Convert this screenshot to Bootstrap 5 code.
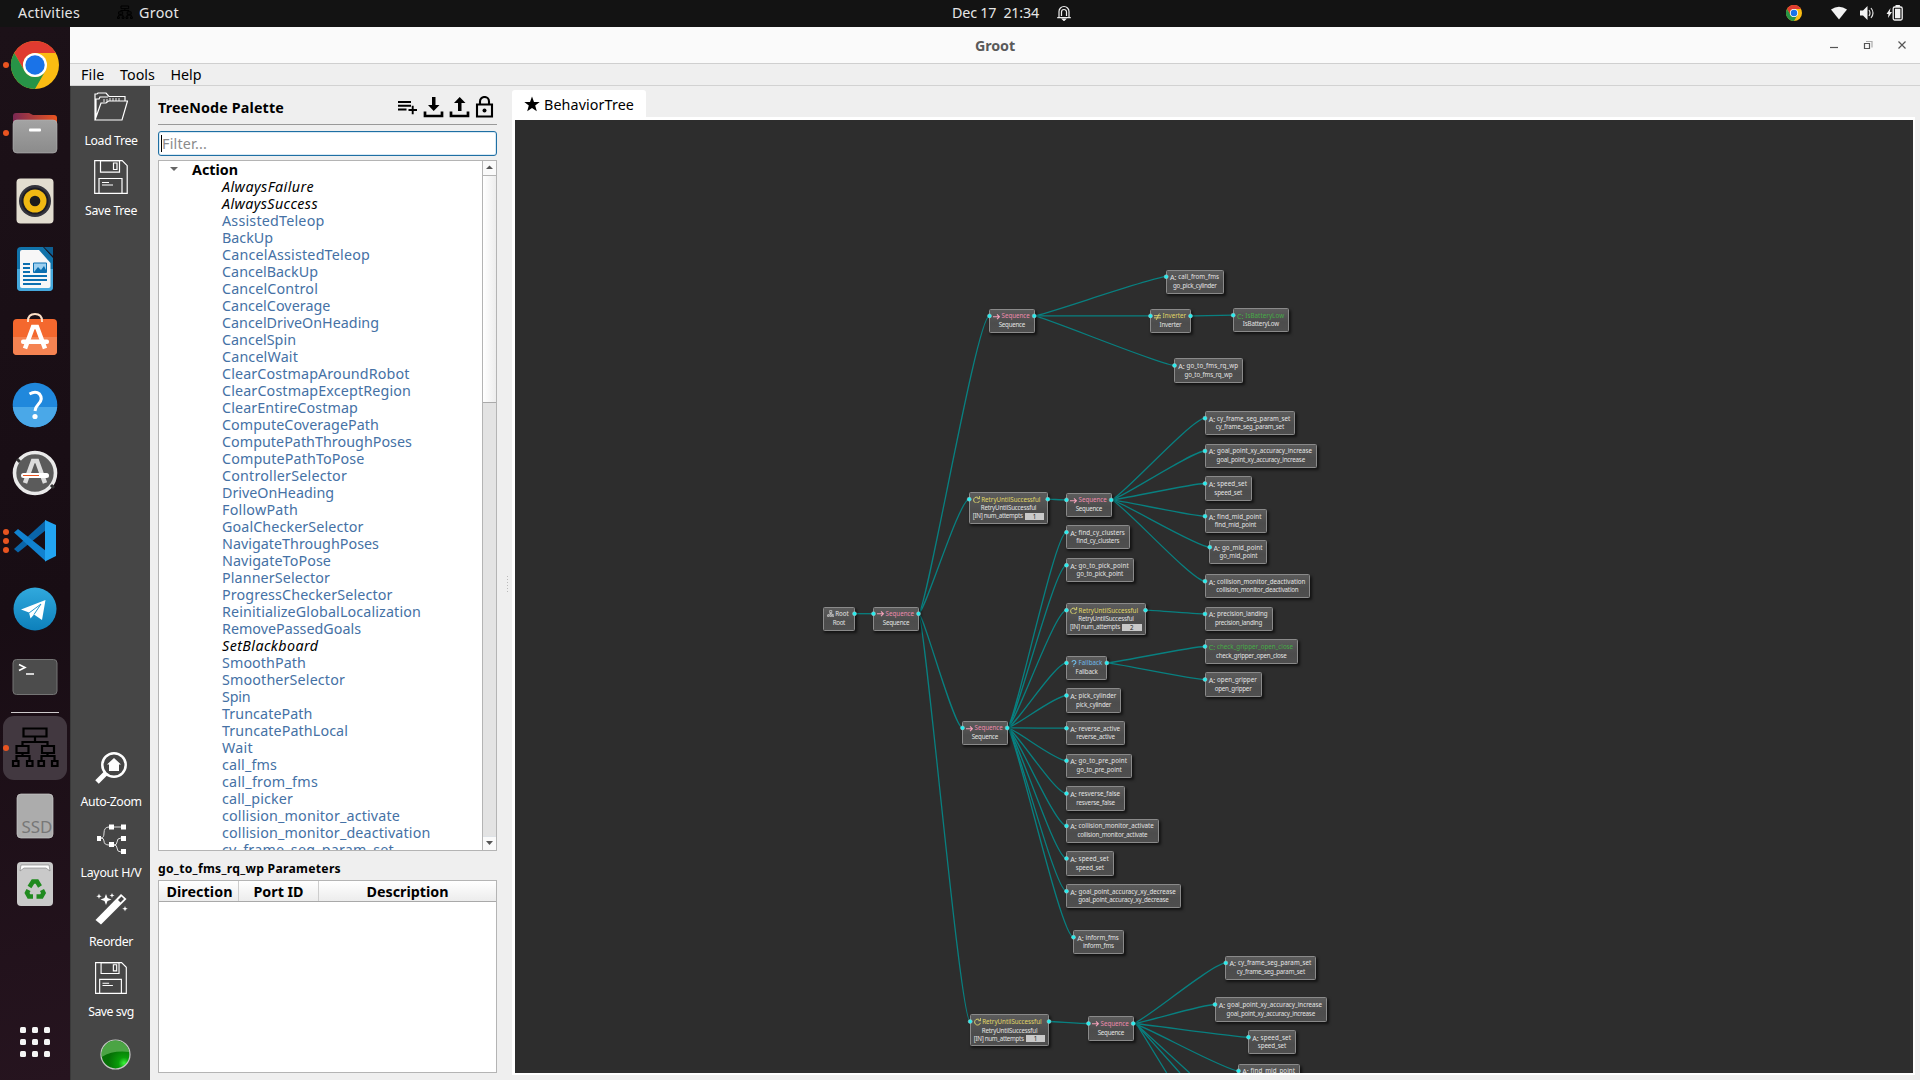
<!DOCTYPE html>
<html lang="en">
<head>
<meta charset="utf-8">
<title>Groot</title>
<link href="https://cdn.jsdelivr.net/npm/bootstrap@5.3.0/dist/css/bootstrap.min.css" rel="stylesheet">
<script src="https://cdn.jsdelivr.net/npm/bootstrap@5.3.0/dist/js/bootstrap.bundle.min.js"></script>
<style>
body{font-family:"Noto Sans","Open Sans",sans-serif;font-size:14.3px;line-height:17px;color:#000;background:#efefef;width:1920px;height:1080px;overflow:hidden}
svg{display:block;flex:none}
[data-w]{white-space:pre;display:inline-block}
.topbar{height:27px;background:#131313;color:#e6e6e6;flex:none;padding-bottom:2px}
.topbar-left{width:952px;padding-left:18px}
.app-icon{margin-left:37px;margin-right:6px}
.bell{margin-left:17px}
.dock{width:70px;padding-top:4px;background:linear-gradient(165deg,#1c1118 0,#180d14 55%,#26141f 100%);flex:none}
.dock-slot{height:68px}
.dock-sep{height:3px;padding:1px 11px}
.dock-sep div{height:1px;background:#cfcbcd}
.titlebar{height:37px;background:#fafafa;border-bottom:1px solid #cfcfcf;flex:none}
.title-side{width:135px}
.menubar{height:22px;border-bottom:1px solid #d2d2d2;padding-left:11px;gap:15.5px;flex:none}
.toolstrip{width:80px;background:#464646;border-left:1px solid #3a3a3a;color:#fff;font-size:12.3px;padding-top:4px;padding-bottom:9px;padding-left:1px;flex:none}
.tool-item{height:70px;gap:8px}
.tool-item svg{width:34px;height:34px}
.side{width:362px;padding:1px 15px 7px 8px;flex:none}
.side-title{height:38px;padding-top:3px;border-bottom:1px solid #999}
.filter-box{height:25px;border:1px solid #1f6fa3;border-radius:3px;background:#fff;color:#8b8b8b;margin-top:6px;padding-left:2px;box-shadow:inset 0 0 0 1px #d8e9f4;flex:none}
.caret-line{width:1px;height:17px;background:#000}
.tree-box{height:691px;margin-top:4px;border:1px solid #b4b4b4;background:#fff;flex:none}
.tree-items{color:#4571a5;padding-left:63px}
.tree-items>div{height:17px}
.builtin{color:#000;font-style:italic}
.sbar{width:14px;background:#e3e3e3;border-left:1px solid #b4b4b4;flex:none}
.sbar-btn{height:14px;background:#fafafa}
.sbar-thumb{height:228px;background:linear-gradient(90deg,#fff,#ededed);border-top:1px solid #b4b4b4;border-bottom:1px solid #aaa}
.param-title{font-size:12.2px;height:29px;padding-top:5px;flex:none}
.param-box{border:1px solid #b4b4b4;background:#fff}
.param-head{height:21px;background:linear-gradient(#fff,#ececec);border-bottom:1px solid #a9a9a9;text-align:center}
.param-head>div+div{border-left:1px solid #cdcdcd}
.splitter-dots{left:437px;top:549px;width:1px;height:17px;background:repeating-linear-gradient(#bbb 0 1px,transparent 1px 3px)}
.tabhead{height:27px;width:134px;margin-top:4px;background:#fff;border-radius:3px 3px 0 0;padding-left:12px;padding-top:1px;gap:4px}
.canvas-frame{height:958px;width:1403px;background:#fff;padding:3px 2px 2px 3px}
.canvas{position:relative;overflow:hidden;width:1398px;height:953px;background:#2d2d2d}
.canvas>svg{position:absolute;left:0;top:0}
.bt-node{position:absolute;background:linear-gradient(#5b5b5b,#4c4c4c 60%,#4f4f4f);border:1px solid #8a8a8a;border-radius:1.5px;box-shadow:1.5px 2px 3px rgba(0,0,0,.6);color:#e2e2e2;font-size:6.2px;line-height:8px}
.bt-node .t1{padding-left:3.2px;height:8px;margin-top:2.6px}
.bt-node .sym{width:8.4px;flex:none;height:8px}
.bt-node .sym svg{width:7.5px;height:7.5px;margin-top:.3px}
.bt-node .sym span{font-size:7.2px}
.bt-node .t2{text-align:center;height:8px;margin-top:.8px}
.bt-node .t3{height:8px;padding-left:3px;gap:2px}
.bt-val{width:19.5px;height:7px;background:#c9c9c9;color:#222;text-align:center;line-height:7px}
</style>
</head>
<body class="d-flex flex-column">
<header class="topbar d-flex align-items-center">
  <div class="topbar-left d-flex align-items-center flex-shrink-0">
    <span data-w="62">Activities</span>
    <svg class="app-icon" width="16" height="15" viewBox="0 0 48 42" fill="none" stroke="#000" stroke-width="3"><use href="#groot"/></svg>
    <span data-w="40">Groot</span>
  </div>
  <span data-w="87">Dec 17  21:34</span>
  <svg class="bell" width="16" height="17" viewBox="0 0 16 17" fill="none" stroke="#eee" stroke-width="1.2"><path d="M3 13.5V7.5a5 5 0 0 1 10 0v6M1.2 13.6h13.6M5.5 12V8a2.5 2.500 0 0 1 5 0v4"/><path d="M6.500 15h3L8 16.500z" fill="#eee"/></svg>
  <div class="ms-auto d-flex align-items-center" style="padding-right:17px">
    <svg width="16" height="16" viewBox="11 10 48 48"><use href="#chrome"/></svg>
    <svg style="margin-left:29px" width="16" height="14" viewBox="0 0 16 14"><path d="M0 3.500Q8-2 16 3.500L8 13.500z" fill="#f2f2f2"/></svg>
    <svg style="margin-left:12px" width="16" height="14" viewBox="0 0 16 14"><path d="M1 4.500h3L8.500 0v14L4 9.500H1z" fill="#f2f2f2"/><path d="M10 4q2 3 0 6M12 2q4 5 0 10" fill="none" stroke="#e0e0e0" stroke-width="1.2"/></svg>
    <svg style="margin-left:11px" width="17" height="16" viewBox="0 0 17 16"><path d="M4.500 3L.5 9h2l-.5 4 4-6H3.800z" fill="#f2f2f2"/><rect x="7.200" y="2" width="9" height="13" rx="1.500" fill="none" stroke="#f2f2f2" stroke-width="1.300"/><path d="M9 3.700h5.400v9.600H9zM9.500 0h4.400v2H9.500z" fill="#f2f2f2"/></svg>
  </div>
</header>

<div class="d-flex flex-grow-1" style="min-height:0">
<nav class="dock d-flex flex-column">
  <svg class="dock-slot" width="70" height="68"><defs>
    <g id="chrome"><circle cx="35" cy="34" r="24" fill="#fbbc12"/><path d="M14.200 22A24 24 0 0 1 55.800 22H35a12 12 0 0 0-10.400 18z" fill="#e03b30"/><path d="M14.200 22A24 24 0 0 0 35 58L45.400 40A12 12 0 0 1 24.600 40z" fill="#279447"/><circle cx="35" cy="34" r="12" fill="#fff"/><circle cx="35" cy="34" r="9.700" fill="#1a73e8"/></g>
    <g id="groot"><path d="M12 1.500h23v8H12zM23.500 9.500v6M11 18v-3h25v3M5 19h12v7H5zM30.500 19h12v7h-12zM11 26v3M5 33v-4h13v4M36 26v3M30 33v-4h13v4M1.500 34h5.500v5H1.500zM15.500 34h5.500v5h-5.500zM27 34h5.500v5H27zM40.500 34H46v5h-5.500z"/></g>
    <g id="floppy" fill="none" stroke="#fff" stroke-width="1.200"><path d="M.7.7h27.500l5 5v27.600H.7z"/><path d="M6.500.7h19v11.500h-19zM19.500 3h3.500v6.500h-3.500zM5 33V18.500h23V33M8 22.500h7M8 25h11"/></g>
    </defs><use href="#chrome"/><circle cx="6" cy="34" r="3" fill="#e95420"/></svg>
  <svg class="dock-slot" width="70" height="68"><defs><linearGradient id="gf" x2="1"><stop stop-color="#7a2853"/><stop offset="1" stop-color="#e95420"/></linearGradient><linearGradient id="gg" x2="0" y2="1"><stop stop-color="#a3a3a3"/><stop offset="1" stop-color="#8b8b8b"/></linearGradient></defs><path d="M13 30V17q0-3 3-3h13l4 2h21q3 0 3 3v10z" fill="url(#gf)"/><rect x="13" y="21" width="44" height="33" rx="4" fill="url(#gg)" stroke="#b5b5b5" stroke-width=".6"/><rect x="29" y="29.500" width="12" height="3" rx="1" fill="#fff"/><circle cx="6" cy="34" r="3" fill="#e95420"/></svg>
  <svg class="dock-slot" width="70" height="68"><rect x="16.500" y="11.500" width="37" height="45" rx="4" fill="#e2ddd0"/><circle cx="35" cy="34" r="16" fill="#34343c"/><circle cx="35" cy="34" r="13.500" fill="#1d1d25"/><circle cx="35" cy="34" r="11.500" fill="#f0b913"/><circle cx="35" cy="34" r="5.300" fill="#1c1c1c"/></svg>
  <svg class="dock-slot" width="70" height="68"><path d="M21 12h22l10 11v29q0 4-4 4H21q-4 0-4-4V16q0-4 4-4z" fill="#1173aa"/><path d="M17 34h36v18q0 4-4 4H21q-4 0-4-4z" fill="#45a8dc"/><path d="M22 15h17l11.500 13v23q0 2-2 2H22q-2 0-2-2V17q0-2 2-2z" fill="#f7f7f7"/><path d="M44 12h9v9z" fill="#0e5f92"/><path d="M23 29h7M23 33h7M23 37h7M23 41h24M23 45h24M23 49h18" stroke="#0b6fb0" stroke-width="2"/><path d="M33.500 28h13v9.500h-13z" fill="#9dd0f0" stroke="#0b6fb0"/><path d="M34 37l4-5 3 3 3-4 3 6z" fill="#0b6fb0"/></svg>
  <svg class="dock-slot" width="70" height="68"><rect x="13" y="16" width="44" height="36" rx="4" fill="#f4682e"/><path d="M13 34h44v14q0 4-4 4H17q-4 0-4-4z" fill="#f58352"/><path d="M28 19v-1q0-7 7-7t7 7v1" fill="none" stroke="#fde0c8" stroke-width="2"/><path d="M25 45.500L33 24h4l8 21.500" fill="none" stroke="#fff" stroke-width="4.500"/><rect x="21" y="36.500" width="28" height="4.500" rx="2" fill="#fff"/></svg>
  <svg class="dock-slot" width="70" height="68"><circle cx="35" cy="34" r="22.300" fill="#2088dc"/><path d="M12.800 36h44.400a22.300 22.300 0 0 1-44.400 0z" fill="#4aa8e8"/><path d="M29.500 23q6-3.500 10 0 4 5-1 10-3 3-3.500 7" fill="none" stroke="#fff" stroke-width="3"/><circle cx="35" cy="45.500" r="2.600" fill="#fff"/></svg>
  <svg class="dock-slot" width="70" height="68"><circle cx="35" cy="34" r="20.500" fill="#5b5b5b" stroke="#eaeaea" stroke-width="3.600"/><path d="M17 20l3 3M51 46l3 3" stroke="#333" stroke-width="3"/><path d="M25 44L33 22h4l8 22" fill="none" stroke="#ddd" stroke-width="4.500"/><rect x="21" y="34" width="28" height="5" rx="2.500" fill="#fff"/><path d="M23 36.500h16" stroke="#e95420"/></svg>
  <svg class="dock-slot" width="70" height="68"><path d="M14 42l4 3.500L46 23V13z" fill="#0a65a9"/><path d="M14 25.500l4-3.500L46 44v10.500z" fill="#1182d0"/><path d="M45 13l11 5v31l-11 5.500z" fill="#22a4f1"/><g fill="#e95420"><circle cx="6" cy="25" r="3"/><circle cx="6" cy="34" r="3"/><circle cx="6" cy="43" r="3"/></g></svg>
  <svg class="dock-slot" width="70" height="68"><defs><linearGradient id="gt" x2="0" y2="1"><stop stop-color="#31a9dd"/><stop offset="1" stop-color="#0d80bb"/></linearGradient></defs><circle cx="35" cy="34" r="21.500" fill="url(#gt)"/><path d="M21 34.500L45.500 25 42 45l-8-5.500-3.500 4-1.500-6z" fill="#fff"/><path d="M29 38l12-9-7 10.500" stroke="#2499cf" fill="none"/></svg>
  <svg class="dock-slot" width="70" height="68"><rect x="13" y="16.500" width="44" height="35" rx="3.500" fill="#4c4c4c" stroke="#747474"/><path d="M19 21.500l6 3-6 3M26 31h8" stroke="#fff" stroke-width="1.600" fill="none"/></svg>
  <div class="dock-sep"><div></div></div>
  <svg class="dock-slot" width="70" height="68"><rect x="3" y="2" width="64" height="64" rx="11" fill="#423840"/><g transform="translate(11.500 13)" fill="none" stroke="#000" stroke-width="2.200"><use href="#groot"/></g><circle cx="6" cy="34" r="3" fill="#e95420"/></svg>
  <svg class="dock-slot" width="70" height="68"><rect x="17" y="12" width="36" height="44" rx="4" fill="#acacac" stroke="#c8c8c8" stroke-width=".7"/><text x="21.500" y="51" font-size="16" textLength="31" lengthAdjust="spacingAndGlyphs" fill="#777">SSD</text></svg>
  <svg class="dock-slot" width="70" height="68"><rect x="17" y="12" width="36" height="44" rx="4" fill="#c9c9c9"/><path d="M20 21l1-6h28l1 6-4-3H24z" fill="#fff" stroke="#777" stroke-width=".6"/><g fill="none" stroke="#208a1f" stroke-width="4.500"><path d="M29.500 37l3.500-5.500h4l3 5"/><path d="M42 40l1.500 3-2 3.500h-5"/><path d="M33 46.500h-4l-2-3.500 1.500-3"/></g></svg>
  <svg class="mt-auto" width="70" height="76" fill="#f5f5f5"><g id="dots"><rect x="20" y="23" width="6" height="6" rx="1.500"/><rect x="32" y="23" width="6" height="6" rx="1.500"/><rect x="44" y="23" width="6" height="6" rx="1.500"/></g><use href="#dots" y="12"/><use href="#dots" y="24"/></svg>
</nav>

<main class="d-flex flex-column flex-grow-1 position-relative">
  <div class="titlebar d-flex align-items-center">
    <div class="title-side"></div>
    <div class="flex-grow-1 text-center fw-bold" style="color:#5a5a5a"><span data-w="40">Groot</span></div>
    <div class="title-side"><svg width="135" height="36" fill="none" stroke="#555" stroke-width="1.200"><path d="M45 20.500h8"/><path d="M79.500 16.500h5v5h-5z"/><path d="M81 14.500h6v6" stroke="#aaa"/><path d="M113.500 14.500l7 7M120.500 14.500l-7 7"/></svg></div>
  </div>
  <div class="menubar d-flex align-items-center"><span data-w="23.500">File</span><span data-w="35">Tools</span><span data-w="31">Help</span></div>
  <div class="d-flex flex-grow-1">
    <div class="toolstrip d-flex flex-column">
      <div class="tool-item d-flex flex-column align-items-center"><svg viewBox="0 0 34 34" fill="none" stroke="#fff" stroke-width="1.200"><path d="M1 30V4h2l1-1h8l3 3.500h16v5M1 30L7 13h5l2.500-2H33.500L28 30zM2 27V9h3l1-2h8"/><path d="M10 9v3M13 9v3M16 8v3M19 8v3M22 8v3M25 8v3" stroke-width=".9"/></svg><span data-w="53">Load Tree</span></div>
      <div class="tool-item d-flex flex-column align-items-center"><svg viewBox="0 0 34 34"><use href="#floppy"/></svg><span data-w="52">Save Tree</span></div>
      <div class="tool-item d-flex flex-column align-items-center mt-auto"><svg viewBox="0 0 34 34"><circle cx="20" cy="14" r="11.700" fill="none" stroke="#fff" stroke-width="2.500"/><path d="M3 31l9-9" stroke="#fff" stroke-width="5"/><path d="M20 7l7 6.500h-2V20H15v-6.500h-2z" fill="#fff"/></svg><span data-w="61">Auto-Zoom</span></div>
      <div class="tool-item d-flex flex-column align-items-center"><svg viewBox="0 0 34 34"><path d="M3 15h4v5H3zM15 3.500h5v5h-5zM27 3.500h5v5h-5zM15 21h5v5h-5zM27 15h5v5h-5zM27 28h5v5h-5z" fill="#fff"/><path d="M7 17q3 0 3-5 0-6 5-6M7 17q3 0 3 3 0 4 5 4M20 6h7M20 24q3 0 3-3 0-4 4-4M20 24q3 0 3 3 0 4 4 4" fill="none" stroke="#ddd"/></svg><span data-w="61" class="pt-1" style="margin-top:-3px">Layout H/V</span></div>
      <div class="tool-item d-flex flex-column align-items-center"><svg viewBox="0 0 34 34"><path d="M1.500 29L27 3l5.500 5L7 33.500z" fill="#fff"/><path d="M24 9l3.500-3.500 2.500 2.500-3.500 3.500z" fill="#464646"/><path d="M12 3l1.500 4 4 1.500-4 1.500L12 14l-1.500-4-4-1.500 4-1.500zM5 2.500l.7 2 2 .7-2 .7-.7 2-.7-2-2-.7 2-.7zM18 2l.7 1.700 1.800.7-1.800.7L18 7l-.7-1.900-1.800-.7 1.800-.7zM31 15l.7 2 2 .7-2 .7-.7 2-.7-2-2-.7 2-.7z" fill="#fff"/></svg><span data-w="44">Reorder</span></div>
      <div class="tool-item d-flex flex-column align-items-center"><svg viewBox="-1 -1 36 36"><use href="#floppy"/></svg><span data-w="45.500">Save svg</span></div>
      <svg width="78" height="40"><defs><radialGradient id="led" cx=".8" cy=".8" r=".8"><stop stop-color="#3df53d"/><stop offset=".25" stop-color="#0a9d0a"/><stop offset=".7" stop-color="#067006"/></radialGradient></defs><circle cx="43.500" cy="23.500" r="14.500" fill="url(#led)" stroke="#c8c8c8" stroke-width="1.200"/><path d="M29.700 26A14 14 0 1 1 57.300 21Q41 19 29.700 26z" fill="#58ad50" opacity=".85"/></svg>
    </div>

    <section class="side d-flex flex-column">
      <div class="side-title d-flex align-items-center"><b data-w="126">TreeNode Palette</b>
        <div class="ms-auto d-flex" style="margin-right:3.5px;gap:5px">
          <svg width="21" height="22" viewBox="0 0 21 22" stroke="#000" stroke-width="1.900"><path d="M1 6h13M1 9.700h13M1 13.500h8.500M11.500 14H20M15.700 9.800v8.500"/></svg>
          <svg width="21" height="22" viewBox="0 0 21 22"><path d="M2 15.500v4.500h17v-4.500" fill="none" stroke="#000" stroke-width="2.700"/><path d="M9 1h3.500v8h4L10.700 15 5 9h4z"/></svg>
          <svg width="21" height="22" viewBox="0 0 21 22"><path d="M2 15.500v4.500h17v-4.500" fill="none" stroke="#000" stroke-width="2.700"/><path d="M9 15h3.500V7h4L10.700 1 5 7h4z"/></svg>
          <svg width="19" height="22" viewBox="0 0 19 22"><path d="M2 8.500h15v12H2zM5 8.500V5.500a4.500 4.500 0 0 1 9 0v3" fill="none" stroke="#000" stroke-width="2.100"/><circle cx="9.500" cy="14.500" r="2"/></svg>
        </div></div>
      <div class="filter-box d-flex align-items-center"><div class="caret-line"></div><span data-w="45">Filter...</span></div>
      <div class="tree-box d-flex">
        <div class="flex-grow-1 overflow-hidden">
          <div class="d-flex align-items-center fw-bold" style="height:17px"><svg width="33" height="17"><path d="M11 6h8l-4 4z" fill="#666"/></svg><span data-w="46">Action</span></div>
          <div class="tree-items" id="treeItems"></div>
        </div>
        <div class="sbar d-flex flex-column">
          <svg class="sbar-btn" width="13" height="13"><path d="M3 8h7L6.500 4.500z" fill="#555"/></svg>
          <div class="sbar-thumb"></div>
          <svg class="sbar-btn mt-auto border-top" width="13" height="14"><path d="M3 4h7L6.500 8z" fill="#555"/></svg>
        </div>
      </div>
      <div class="param-title d-flex align-items-center fw-bold"><span data-w="183">go_to_fms_rq_wp Parameters</span></div>
      <div class="param-box flex-grow-1"><div class="param-head d-flex fw-bold">
        <div style="width:79px;padding:2px 0 0 2px"><span data-w="66">Direction</span></div><div style="width:80px;padding-top:2px"><span data-w="50">Port ID</span></div><div class="flex-grow-1" style="padding-top:2px"><span data-w="82">Description</span></div>
      </div></div>
    </section>

    <section>
      <div class="tabhead d-flex align-items-center"><svg width="16" height="16" viewBox="0 0 16 16"><path d="M8 .5l2 5.400 5.700.2-4.500 3.500 1.600 5.600L8 12l-4.800 3.200 1.600-5.600L.3 6.100 6 5.900z"/></svg><span data-w="90">BehaviorTree</span></div>
      <div class="canvas-frame"><div class="canvas" id="canvas"></div></div>
    </section>
  </div>
  <div class="splitter-dots position-absolute"></div>
</main>
</div>

<script>
// Palette entries: label and rendered width in pixels
const items = [["AlwaysFailure",92],["AlwaysSuccess",96],["AssistedTeleop",102.5],["BackUp",51],["CancelAssistedTeleop",148],["CancelBackUp",96],["CancelControl",96],["CancelCoverage",108.5],["CancelDriveOnHeading",157],["CancelSpin",74],["CancelWait",76],["ClearCostmapAroundRobot",187.5],["ClearCostmapExceptRegion",189],["ClearEntireCostmap",136],["ComputeCoveragePath",157],["ComputePathThroughPoses",190],["ComputePathToPose",142.5],["ControllerSelector",125],["DriveOnHeading",112],["FollowPath",76],["GoalCheckerSelector",141.5],["NavigateThroughPoses",157],["NavigateToPose",109],["PlannerSelector",108],["ProgressCheckerSelector",170.5],["ReinitializeGlobalLocalization",199],["RemovePassedGoals",139],["SetBlackboard",96.5],["SmoothPath",84],["SmootherSelector",123],["Spin",28.5],["TruncatePath",90.5],["TruncatePathLocal",126],["Wait",31],["call_fms",55],["call_from_fms",96],["call_picker",71],["collision_monitor_activate",178],["collision_monitor_deactivation",208.5],["cy_frame_seg_param_set",172]];
const builtins = ["AlwaysFailure","AlwaysSuccess","SetBlackboard"];
document.getElementById("treeItems").innerHTML = items.map(([t,w]) =>
  `<div${builtins.includes(t) ? ' class="builtin"' : ''}><span data-w="${w}">${t}</span></div>`).join("");

// Tree nodes: key, kind, title, subtitle, left, top, right, attempts
const nodes = [
["root","R","Root","Root",822.7,606.5,855],["s0","S","Sequence","Sequence",873,606.5,919],
["s1","S","Sequence","Sequence",989,308.7,1034.700],["a1","A","call_from_fms","go_pick_cylinder",1165.700,269.5,1224],
["inv","I","Inverter","Inverter",1150,308.7,1191],["bat","C","IsBatteryLow","IsBatteryLow",1232.700,308,1289],
["a2","A","go_to_fms_rq_wp","go_to_fms_rq_wp",1174,358.3,1243],
["r1","L","RetryUntilSuccessful","RetryUntilSuccessful",968.700,492,1048.300,1],["s2","S","Sequence","Sequence",1066,492.7,1111.700],
["b1","A","cy_frame_seg_param_set","",1204.5,411,1295.300],["b2","A","goal_point_xy_accuracy_increase","",1204.5,443.8,1317],
["b3","A","speed_set","",1204.5,476.3,1252],["b4","A","find_mid_point","",1204.5,509,1266.500],
["b5","A","go_mid_point","",1209.300,540,1267.500],["b6","A","collision_monitor_deactivation","",1204.5,574,1310.300],
["s3","S","Sequence","Sequence",962,720.7,1007.700],
["c1","A","find_cy_clusters","",1066,525,1129.700],["c2","A","go_to_pick_point","",1066,558,1133.700],
["r2","L","RetryUntilSuccessful","RetryUntilSuccessful",1066,603,1146,2],["fb","F","Fallback","Fallback",1066,655.7,1107.300],
["c3","A","pick_cylinder","",1066,688.3,1121.300],["c4","A","reverse_active","",1066,721,1125],
["c5","A","go_to_pre_point","",1066,753.5,1132],["c6","A","resverse_false","",1066,786.3,1125],
["c7","A","collision_monitor_activate","",1066,818.700,1158.700],["c8","A","speed_set","",1066,851.300,1113.700],
["c9","A","goal_point_accuracy_xy_decrease","",1066,884,1180.700],["c10","A","inform_fms","",1073,930,1123.700],
["d1","A","precision_landing","",1204.5,606.700,1272.500],["d2","C","check_gripper_open_close","",1204.5,639.3,1298],
["d3","A","open_gripper","",1204.5,672.300,1261.700],
["r3","L","RetryUntilSuccessful","RetryUntilSuccessful",969.700,1014.300,1049.500,1],["s4","S","Sequence","Sequence",1088,1016.300,1133.700],
["e1","A","cy_frame_seg_param_set","",1225.300,955.700,1316.300],["e2","A","goal_point_xy_accuracy_increase","",1214.5,997.300,1327],
["e3","A","speed_set","",1248,1030,1296],["e4","A","find_mid_point","",1238,1063.700,1300]];
const links = {root:["s0"],s0:["s1","r1","s3","r3"],s1:["a1","inv","a2"],inv:["bat"],r1:["s2"],s2:["b1","b2","b3","b4","b5","b6"],
s3:["c1","c2","r2","fb","c3","c4","c5","c6","c7","c8","c9","c10"],r2:["d1"],fb:["d2","d3"],r3:["s4"],s4:["e1","e2","e3","e4"]};
const colors = {R:"#e4e4e4",S:"#ec8aac",A:"#e4e4e4",C:"#46ac46",I:"#e0d766",L:"#e0d766",F:"#6cb8e8"};
const svg = (c,d) => `<svg viewBox="0 0 14 14" fill="none" stroke="${c}" stroke-width="2">${d}</svg>`;
const symbols = {
 R:svg("#dedede",'<path d="M5 1h4v4H5zM1 9h3v3H1zM5.500 9h3v3h-3zM10 9h3v3h-3zM7 5v4M2.500 9L7 6l4.500 3" stroke-width="1.200"/>'),
 S:svg("#f3a0b8",'<path d="M0 7h12M7.500 2.500L12 7l-4.500 4.500"/>'),
 A:'<span data-w="6.600">A:</span>',
 C:'<span data-w="6.600" style="color:#46b046">C:</span>',
 I:svg("#e4dc70",'<path d="M0 5h13M0 9h13M10 1L4 13" stroke-width="1.600"/>'),
 L:svg("#e4dc70",'<path d="M12 9a5.500 5.500 0 1 1-2-5.800M12.500 0v5H8" stroke-width="1.700"/>'),
 F:svg("#70c0ee",'<path d="M3.500 4q1-3 4-3t3.500 3q0 2-2 3T7 10M7 11.500V14" stroke-width="2"/>')};
const OX = 515, OY = 120, byKey = {};
let boxes = "", dots = "", lines = "";
for (const [k,kind,t,sub,x,y,r,n] of nodes) {
  byKey[k] = {x:x+.5-OX, r:r-.5-OX, y:y+7.200-OY};
  const w = r-x, tw = w - (n ? 20.500 : kind==="R" ? 19 : 17.500), sw = (sub && sub!==t) ? 43.500 : n ? 55.500 : tw*.93;
  boxes += `<div class="bt-node" style="left:${x-OX}px;top:${y-OY}px;width:${w}px;height:${n?31.700:24.300}px">
  <div class="t1 d-flex"><div class="sym">${symbols[kind]}</div><span data-w="${tw}" style="color:${colors[kind]}">${t}</span></div>
  <div class="t2"><span data-w="${sw}">${sub||t}</span></div>${n?`<div class="t3 d-flex align-items-center"><span data-w="50">[IN] num_attempts</span><div class="bt-val">${n}</div></div>`:""}</div>`;
  if (k !== "root") dots += `<circle cx="${byKey[k].x}" cy="${byKey[k].y}" r="2"/>`;
  if (links[k]) dots += `<circle cx="${byKey[k].r}" cy="${byKey[k].y}" r="2"/>`;
}
for (const k in links) for (const d of links[k]) {
  const a = byKey[k], b = byKey[d], o = Math.min(13, (b.x-a.r)*.2);
  lines += `<path d="M${a.r} ${a.y}C${a.r+o*.6} ${a.y} ${b.x-o} ${b.y} ${b.x} ${b.y}"/>`;
}
// Children of the last sequence that continue below the viewport
for (const ex of [1166.700,1180,1189.700]) lines += `<path d="M${byKey.s4.r} ${byKey.s4.y}l4 1.500L${ex-OX} 953"/>`;
document.getElementById("canvas").innerHTML =
 `<svg width="1398" height="953" fill="none" stroke="#088080" stroke-width="1.300">${lines}</svg>${boxes}<svg width="1398" height="953" fill="#22eef0" stroke="#a8c8c8" stroke-width=".5">${dots}</svg>`;

// Track each label to its width
document.querySelectorAll("[data-w]").forEach(e => {
  const w = e.getBoundingClientRect().width, n = e.textContent.length;
  e.style.letterSpacing = ((+e.dataset.w - w) / n) + "px";
});
</script>
</body>
</html>
